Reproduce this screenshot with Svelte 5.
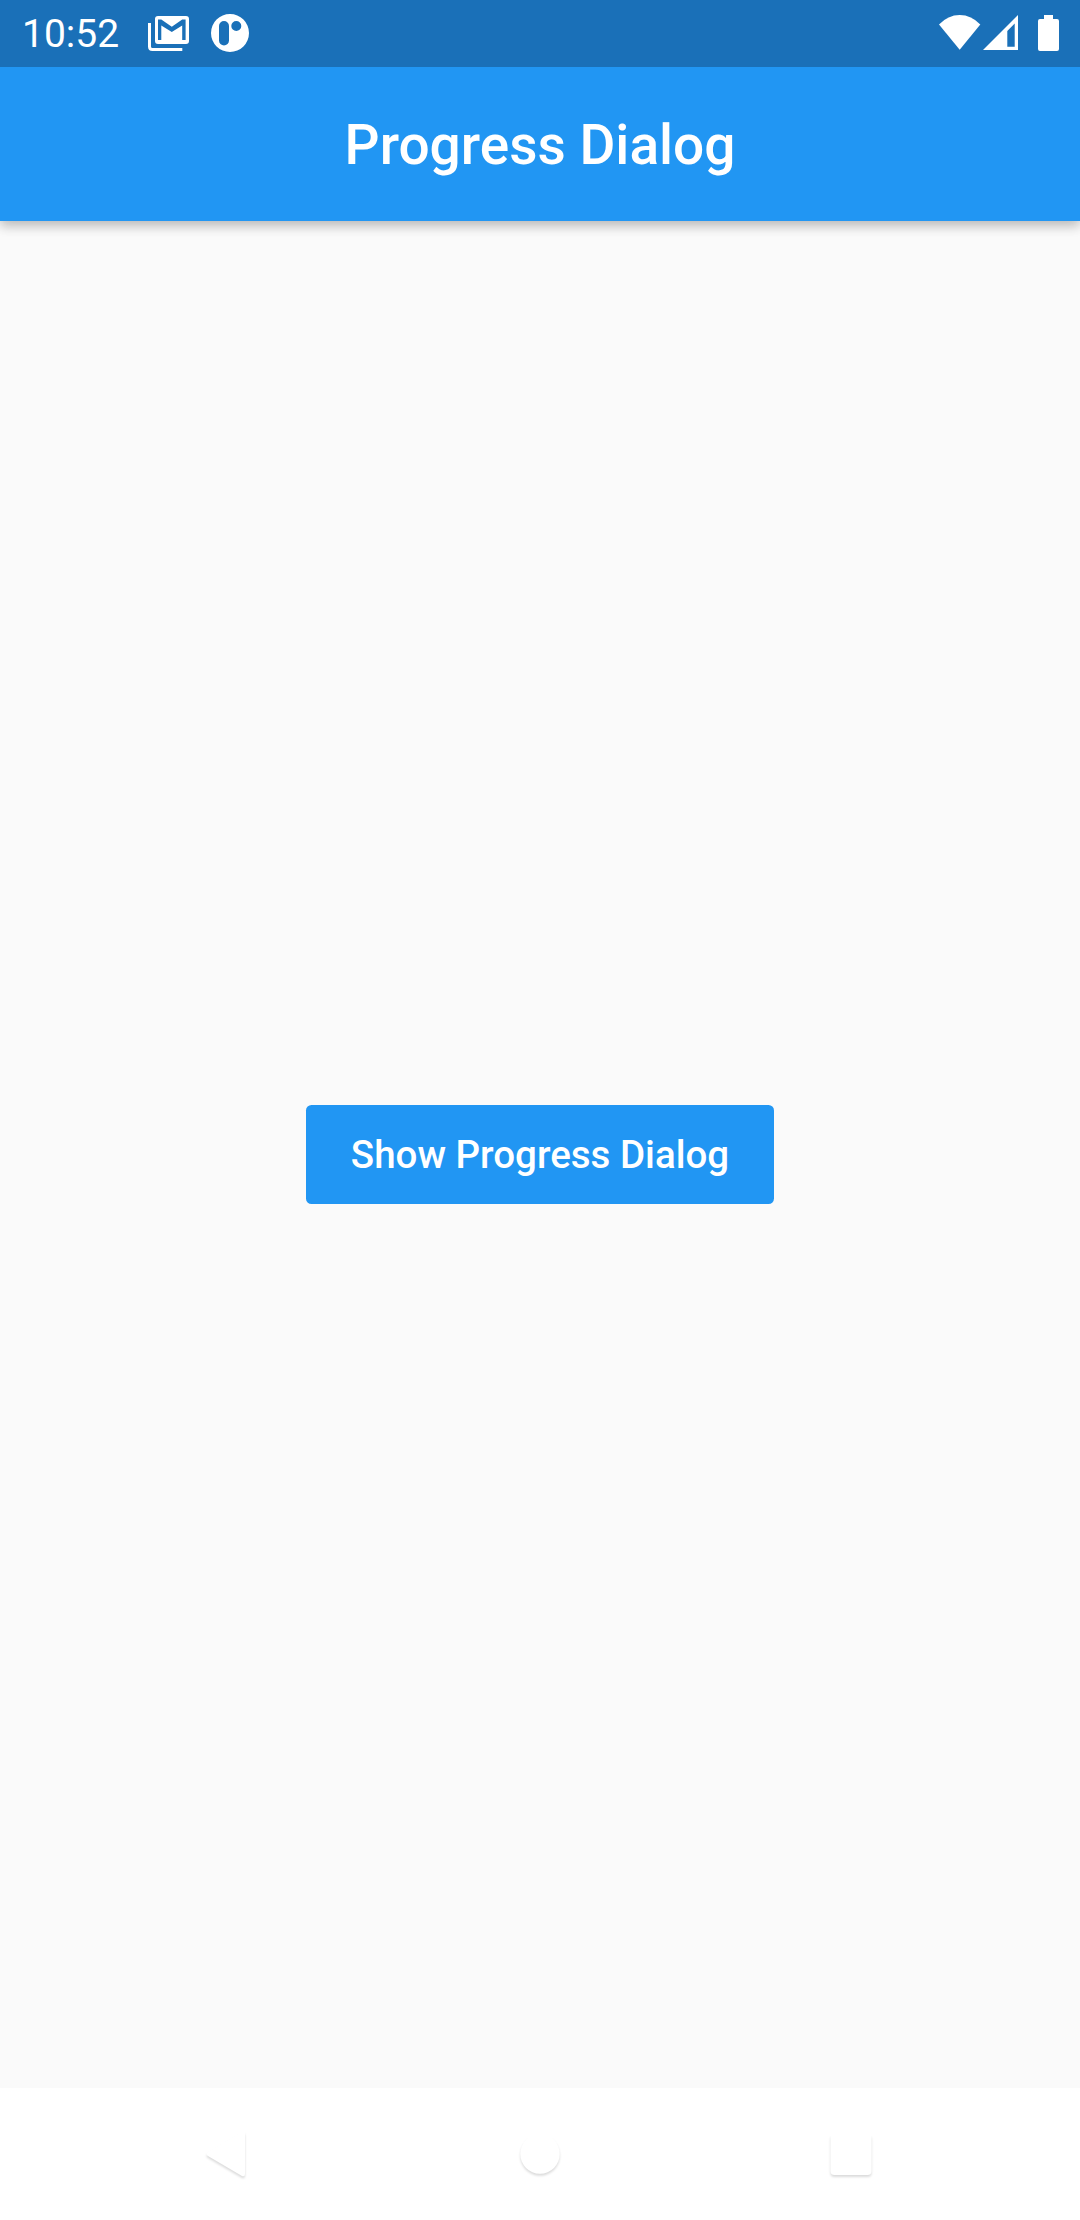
<script>
  let showing = $state(false);
</script>

<div class="screen">
  <header class="status">
    <time>10:52</time>
    <svg class="mail" viewBox="0 0 42 36" aria-hidden="true">
      <path class="outline" d="M1.5 7V30.5Q1.5 33.5 4.5 33.5H34.3" />
      <path fill-rule="evenodd" d="M10 0H38Q41 0 41 3V25Q41 28 38 28H10Q7 28 7 25V3Q7 0 10 0ZM10 3.4V24H13.3V9.5L23.8 16L34.2 9.5V24H37.6V3.4H34.2L23.8 10.8L13.3 3.4Z" />
    </svg>
    <svg class="app" viewBox="0 0 38 38" aria-hidden="true">
      <path fill-rule="evenodd" d="M19 0A19 19 0 1 1 19 38A19 19 0 1 1 19 0ZM8 12V26.5A5 5 0 0 0 18 26.5V12A5 5 0 0 0 8 12ZM25.3 7A5 5 0 1 0 25.3 17A5 5 0 1 0 25.3 7Z" />
    </svg>
    <span class="spacer"></span>
    <svg class="wifi" viewBox="0 0 42 35" aria-hidden="true"><path d="M0 9.5Q9 0 20.7 0T41.3 9.5L20.7 34.7Z" /></svg>
    <svg class="signal" viewBox="0 0 36 35" aria-hidden="true"><path fill-rule="evenodd" d="M0 35L35 0V35ZM24.3 16V31.7H31.7V8.6Z" /></svg>
    <svg class="battery" viewBox="0 0 21 36" aria-hidden="true"><path d="M6 0H15V4H19Q21 4 21 6V34Q21 36 19 36H2Q0 36 0 34V6Q0 4 2 4H6Z" /></svg>
  </header>

  <div class="appbar"><h1>Progress Dialog</h1></div>

  <main>
    <button aria-pressed={showing} onclick={() => (showing = !showing)}>Show Progress Dialog</button>
  </main>

  <nav>
    <svg viewBox="0 0 60 60" aria-label="Back"><path d="M13 28Q10 30 13 32L47 52Q50 53 50 50V10Q50 7 47 8Z" /></svg>
    <svg viewBox="0 0 60 60" aria-label="Home"><circle cx="30" cy="30" r="19.7" /></svg>
    <svg viewBox="0 0 60 60" aria-label="Recents"><rect x="5.5" y="10" width="41" height="41" rx="4" /></svg>
  </nav>
</div>

<style>
  :global(body) { margin: 0; }
  .screen {
    width: 1080px;
    height: 2220px;
    display: flex;
    flex-direction: column;
    background: #fafafa;
    font-family: Roboto, sans-serif;
    overflow: hidden;
  }
  .status {
    flex: 0 0 66px;
    box-sizing: border-box;
    display: flex;
    align-items: flex-start;
    padding: 0 21.5px 0 22px;
    background: #1a70b8;
    color: #fff;
    z-index: 2;
  }
  time {
    width: 126px;
    padding-top: 1px;
    font-size: 39px;
    line-height: 66px;
  }
  .status svg { fill: #fff; flex: none; }
  .status .outline { fill: none; stroke: #fff; stroke-width: 3; }
  .mail { width: 42px; height: 36px; margin-top: 16px; }
  .app { width: 38px; height: 38px; margin: 14px 0 0 20.5px; }
  .spacer { flex: 1; }
  .wifi { width: 42px; height: 35px; margin: 15px 2px 0 0; }
  .signal { width: 36px; height: 35px; margin: 15px 19px 0 0; }
  .battery { width: 21px; height: 36px; margin-top: 15px; }
  .appbar {
    flex: 0 0 154px;
    display: flex;
    align-items: center;
    justify-content: center;
    background: #2196f3;
    box-shadow: 0 5px 11px rgba(0, 0, 0, .2), 0 2px 14px rgba(0, 0, 0, .1);
    z-index: 1;
  }
  h1 {
    margin: 0;
    padding-top: 1px;
    color: #fff;
    font-size: 55px;
    line-height: 64px;
    font-weight: 500;
  }
  main {
    flex: 1;
    display: flex;
    align-items: center;
    justify-content: center;
  }
  button {
    width: 468px;
    height: 99px;
    padding: 0;
    border: 0;
    border-radius: 5.5px;
    background: #2196f3;
    color: #fff;
    font: 500 38.5px/45px Roboto, sans-serif;
  }
  nav {
    flex: 0 0 132px;
    box-sizing: border-box;
    display: flex;
    justify-content: space-between;
    padding: 36px 195px 0;
    background: #fff;
  }
  nav svg {
    width: 60px;
    height: 60px;
    fill: #fff;
    overflow: visible;
    filter: drop-shadow(0 2.5px 1px rgba(0, 0, 0, .14));
  }
</style>
